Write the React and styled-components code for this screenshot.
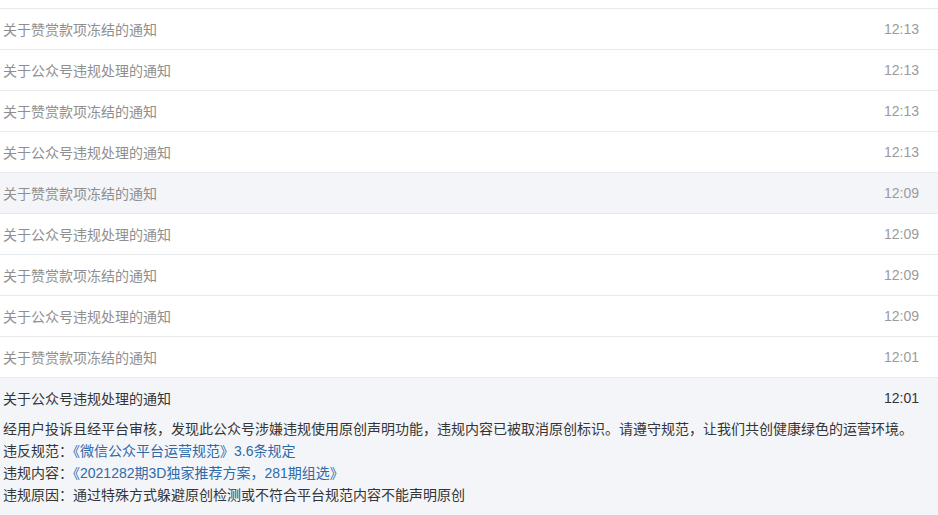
import React from 'react';
import styled, { createGlobalStyle } from 'styled-components';

const GlobalStyle = createGlobalStyle`
  html, body {
    margin: 0;
    padding: 0;
    background: #fff;
    font-family: "Liberation Sans", "Noto Sans CJK SC", sans-serif;
  }
`;

const List = styled.ul`
  list-style: none;
  margin: 8px 0 0;
  padding: 0;
  border-top: 1px solid #e7eaed;
`;

const Item = styled.li`
  border-bottom: 1px solid #e7eaed;
  background: ${props => (props.$active ? '#f4f5f9' : '#fff')};
`;

const Head = styled.div`
  height: 40px;
  display: flex;
  align-items: center;
  justify-content: space-between;
  padding: 0 19px 0 3px;
  font-size: 14px;
  color: ${props => (props.$open ? '#353535' : '#8f8f8f')};
`;

const Title = styled.span`
  white-space: nowrap;
`;

const Time = styled.span`
  font-size: 14px;
  color: ${props => (props.$open ? '#353535' : '#9b9b9b')};
`;

const Body = styled.div`
  padding: 0 19px 12px 3px;
  font-size: 14px;
  line-height: 22px;
  color: #353535;
`;

const Line = styled.p`
  margin: 0;
  white-space: nowrap;
`;

const Link = styled.span`
  color: #2f6aa8;
`;

const FREEZE = '关于赞赏款项冻结的通知';
const VIOLATE = '关于公众号违规处理的通知';

const rows = [
  { title: FREEZE, time: '12:13' },
  { title: VIOLATE, time: '12:13' },
  { title: FREEZE, time: '12:13' },
  { title: VIOLATE, time: '12:13' },
  { title: FREEZE, time: '12:09', hover: true },
  { title: VIOLATE, time: '12:09' },
  { title: FREEZE, time: '12:09' },
  { title: VIOLATE, time: '12:09' },
  { title: FREEZE, time: '12:01' },
];

export default function App() {
  return (
    <>
      <GlobalStyle />
      <List>
        {rows.map((r, i) => (
          <Item key={i} $active={r.hover}>
            <Head>
              <Title>{r.title}</Title>
              <Time>{r.time}</Time>
            </Head>
          </Item>
        ))}
        <Item $active>
          <Head $open>
            <Title>{VIOLATE}</Title>
            <Time $open>12:01</Time>
          </Head>
          <Body>
            <Line>
              经用户投诉且经平台审核，发现此公众号涉嫌违规使用原创声明功能，违规内容已被取消原创标识。请遵守规范，让我们共创健康绿色的运营环境。
            </Line>
            <Line>
              违反规范：<Link>《微信公众平台运营规范》3.6条规定</Link>
            </Line>
            <Line>
              违规内容：<Link>《2021282期3D独家推荐方案，281期组选》</Link>
            </Line>
            <Line>违规原因：通过特殊方式躲避原创检测或不符合平台规范内容不能声明原创</Line>
          </Body>
        </Item>
      </List>
    </>
  );
}
